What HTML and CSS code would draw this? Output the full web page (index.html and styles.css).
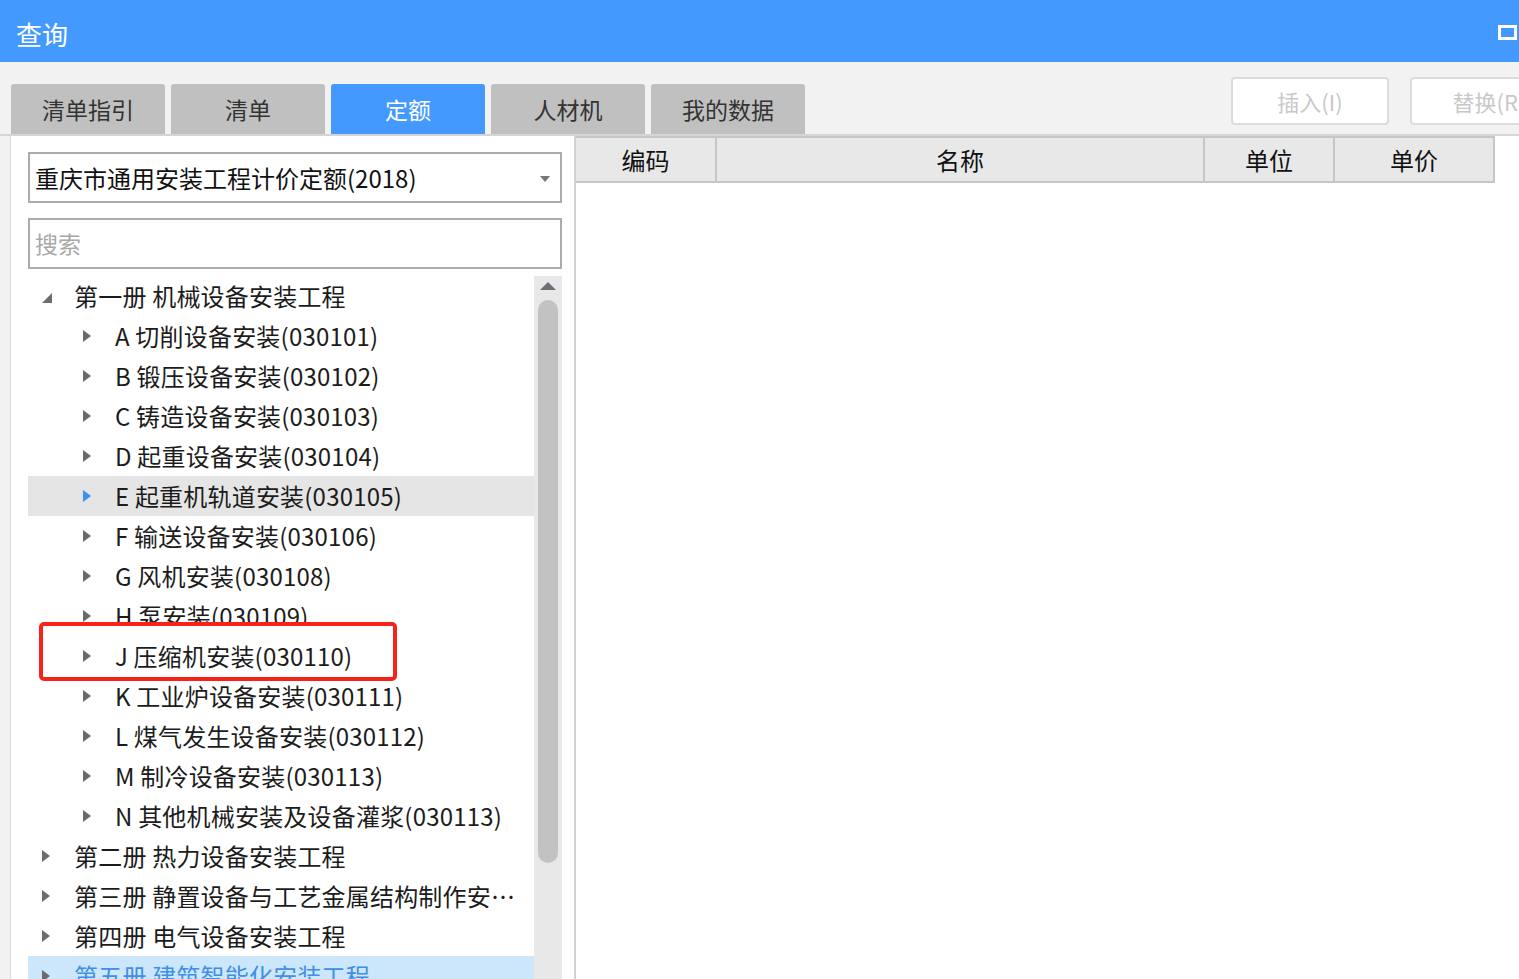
FILE: index.html
```html
<!DOCTYPE html>
<html lang="zh-CN">
<head>
<meta charset="utf-8">
<title>查询</title>
<link rel="stylesheet" href="styles.css">
</head>
<body>
<div class="window">
  <div class="titlebar">
    <span class="title">查询</span>
    <span class="win-btn"></span>
  </div>
  <div class="toolbar">
    <div class="tabs">
      <div class="tab">清单指引</div>
      <div class="tab">清单</div>
      <div class="tab active">定额</div>
      <div class="tab">人材机</div>
      <div class="tab">我的数据</div>
    </div>
    <div class="actions">
      <button class="btn">插入(I)</button>
      <button class="btn">替换(R)</button>
    </div>
  </div>
  <div class="main">
    <div class="left">
      <div class="select">
        <span class="select-text">重庆市通用安装工程计价定额(2018)</span>
        <svg class="caret" width="10" height="6" viewBox="0 0 10 6"><path d="M0 0H10L5 6Z" fill="#777"/></svg>
      </div>
      <div class="search">搜索</div>
      <div class="tree">
        <div class="tree-list">
          <div class="row lv1 open"><svg class="arr" width="12" height="12" viewBox="0 0 12 12"><path d="M11 1V11H1Z" fill="#6e6e6e"/></svg><span class="txt">第一册 机械设备安装工程</span></div>
          <div class="row lv2"><svg class="arr" width="8" height="12" viewBox="0 0 8 12"><path d="M0 0L8 6L0 12Z" fill="#6b6b6b"/></svg><span class="txt">A 切削设备安装(030101)</span></div>
          <div class="row lv2"><svg class="arr" width="8" height="12" viewBox="0 0 8 12"><path d="M0 0L8 6L0 12Z" fill="#6b6b6b"/></svg><span class="txt">B 锻压设备安装(030102)</span></div>
          <div class="row lv2"><svg class="arr" width="8" height="12" viewBox="0 0 8 12"><path d="M0 0L8 6L0 12Z" fill="#6b6b6b"/></svg><span class="txt">C 铸造设备安装(030103)</span></div>
          <div class="row lv2"><svg class="arr" width="8" height="12" viewBox="0 0 8 12"><path d="M0 0L8 6L0 12Z" fill="#6b6b6b"/></svg><span class="txt">D 起重设备安装(030104)</span></div>
          <div class="row lv2 hover"><svg class="arr" width="8" height="12" viewBox="0 0 8 12"><path d="M0 0L8 6L0 12Z" fill="#3d8ef5"/></svg><span class="txt">E 起重机轨道安装(030105)</span></div>
          <div class="row lv2"><svg class="arr" width="8" height="12" viewBox="0 0 8 12"><path d="M0 0L8 6L0 12Z" fill="#6b6b6b"/></svg><span class="txt">F 输送设备安装(030106)</span></div>
          <div class="row lv2"><svg class="arr" width="8" height="12" viewBox="0 0 8 12"><path d="M0 0L8 6L0 12Z" fill="#6b6b6b"/></svg><span class="txt">G 风机安装(030108)</span></div>
          <div class="row lv2 clipped"><svg class="arr" width="8" height="12" viewBox="0 0 8 12"><path d="M0 0L8 6L0 12Z" fill="#6b6b6b"/></svg><span class="txt">H 泵安装(030109)</span></div>
          <div class="row lv2"><svg class="arr" width="8" height="12" viewBox="0 0 8 12"><path d="M0 0L8 6L0 12Z" fill="#6b6b6b"/></svg><span class="txt">J 压缩机安装(030110)</span></div>
          <div class="row lv2"><svg class="arr" width="8" height="12" viewBox="0 0 8 12"><path d="M0 0L8 6L0 12Z" fill="#6b6b6b"/></svg><span class="txt">K 工业炉设备安装(030111)</span></div>
          <div class="row lv2"><svg class="arr" width="8" height="12" viewBox="0 0 8 12"><path d="M0 0L8 6L0 12Z" fill="#6b6b6b"/></svg><span class="txt">L 煤气发生设备安装(030112)</span></div>
          <div class="row lv2"><svg class="arr" width="8" height="12" viewBox="0 0 8 12"><path d="M0 0L8 6L0 12Z" fill="#6b6b6b"/></svg><span class="txt">M 制冷设备安装(030113)</span></div>
          <div class="row lv2"><svg class="arr" width="8" height="12" viewBox="0 0 8 12"><path d="M0 0L8 6L0 12Z" fill="#6b6b6b"/></svg><span class="txt">N 其他机械安装及设备灌浆(030113)</span></div>
          <div class="row lv1"><svg class="arr" width="8" height="12" viewBox="0 0 8 12"><path d="M0 0L8 6L0 12Z" fill="#6b6b6b"/></svg><span class="txt">第二册 热力设备安装工程</span></div>
          <div class="row lv1"><svg class="arr" width="8" height="12" viewBox="0 0 8 12"><path d="M0 0L8 6L0 12Z" fill="#6b6b6b"/></svg><span class="txt">第三册 静置设备与工艺金属结构制作安装工程</span></div>
          <div class="row lv1"><svg class="arr" width="8" height="12" viewBox="0 0 8 12"><path d="M0 0L8 6L0 12Z" fill="#6b6b6b"/></svg><span class="txt">第四册 电气设备安装工程</span></div>
          <div class="row lv1 selected"><svg class="arr" width="8" height="12" viewBox="0 0 8 12"><path d="M0 0L8 6L0 12Z" fill="#6b6b6b"/></svg><span class="txt">第五册 建筑智能化安装工程</span></div>
          <div class="mark"></div>
        </div>
        <div class="scrollbar">
          <svg class="up" width="16" height="8" viewBox="0 0 16 8"><path d="M8 0L16 8H0Z" fill="#6e6e78"/></svg>
          <div class="thumb"></div>
        </div>
      </div>
    </div>
    <div class="right">
      <div class="grid-head">
        <div class="col c1">编码</div>
        <div class="col c2">名称</div>
        <div class="col c3">单位</div>
        <div class="col c4">单价</div>
      </div>
    </div>
  </div>
</div>
</body>
</html>
```

FILE: styles.css
```css
* { box-sizing: border-box; }
html, body {
  margin: 0;
  padding: 0;
  width: 1519px;
  height: 979px;
  overflow: hidden;
  background: #f2f2f2;
  font-family: "Noto Sans CJK SC", "Noto Sans", sans-serif;
}
.window {
  width: 1519px;
  height: 979px;
  display: flex;
  flex-direction: column;
  overflow: hidden;
}
.titlebar {
  height: 62px;
  flex-shrink: 0;
  background: #4499ff;
  display: flex;
  align-items: center;
  justify-content: space-between;
  padding: 0 2px 0 16px;
}
.title {
  color: #fff;
  font-size: 26px;
  line-height: 30px;
  margin-top: 6px;
}
.win-btn {
  width: 19px;
  height: 15px;
  border: 3px solid #fff;
  background: #4499ff;
  margin-top: 2px;
}
.toolbar {
  height: 72px;
  flex-shrink: 0;
  display: flex;
  justify-content: space-between;
  padding-left: 11px;
  overflow: hidden;
}
.tabs {
  display: flex;
  gap: 6px;
  align-self: flex-end;
}
.tab {
  width: 154px;
  height: 50px;
  background: #c0c0c0;
  border-radius: 3px 3px 0 0;
  color: #333;
  font-size: 23px;
  line-height: 50px;
  text-align: center;
}
.tab.active {
  background: #4499ff;
  color: #fff;
}
.actions {
  display: flex;
  gap: 21px;
  padding-top: 15px;
  margin-right: -49px;
}
.btn {
  width: 158px;
  height: 48px;
  flex-shrink: 0;
  background: #fff;
  border: 2px solid #dcdcdc;
  border-radius: 4px;
  color: #c8c8c8;
  font-family: "Noto Sans CJK SC", "Noto Sans", sans-serif;
  font-size: 22px;
  line-height: 40px;
  padding: 0;
}
.main {
  flex: 1;
  display: flex;
  border-top: 2px solid #d6d6d6;
  padding-left: 10px;
  min-height: 0;
}
.left {
  width: 566px;
  flex-shrink: 0;
  background: #fff;
  border-left: 1px solid #dedede;
  border-right: 2px solid #d2d2d2;
  padding: 16px 12px 0 17px;
  display: flex;
  flex-direction: column;
  min-height: 0;
}
.select {
  height: 51px;
  border: 2px solid #acacac;
  display: flex;
  align-items: center;
  justify-content: space-between;
  padding: 0 10px 0 5px;
  flex-shrink: 0;
}
.select-text {
  font-size: 24px;
  color: #111;
  line-height: 30px;
}
.caret { margin-top: 2px; }
.search {
  margin-top: 15px;
  height: 51px;
  border: 2px solid #acacac;
  padding-left: 5px;
  font-size: 23px;
  line-height: 47px;
  color: #a8a8a8;
  flex-shrink: 0;
}
.tree {
  margin-top: 7px;
  flex: 1;
  display: flex;
  min-height: 0;
  overflow: hidden;
}
.tree-list {
  flex: 1;
  position: relative;
  min-width: 0;
}
.row {
  height: 40px;
  display: flex;
  align-items: center;
  font-size: 24px;
  color: #1c1c1c;
  white-space: nowrap;
  letter-spacing: 0.2px;
}
.row .txt {
  line-height: 40px;
  overflow: hidden;
  text-overflow: ellipsis;
  padding-right: 18px;
}
.row.lv1 .arr { margin-left: 14px; margin-right: 24px; flex-shrink: 0; }
.row.lv1.open .arr { margin-left: 13px; margin-right: 21px; margin-top: 4px; }
.row.lv2 .arr { margin-left: 55px; margin-right: 24px; flex-shrink: 0; }
.row.hover { background: #e5e5e5; }
.row.selected { background: #cce6fc; color: #3f8fe6; }
.row.clipped { align-items: flex-start; }
.row.clipped .txt { height: 28px; }
.row.clipped .arr { margin-top: 14px; }
.mark {
  position: absolute;
  left: 11px;
  top: 346px;
  width: 358px;
  height: 59px;
  border: 4px solid #f7231a;
  border-radius: 5px;
}
.scrollbar {
  width: 28px;
  flex-shrink: 0;
  background: #e8e8e8;
  display: flex;
  flex-direction: column;
  align-items: center;
  padding-top: 6px;
}
.up { flex-shrink: 0; }
.thumb {
  margin-top: 10px;
  width: 20px;
  height: 563px;
  background: #c2c2c2;
  border-radius: 10px;
}
.right {
  flex: 1;
  background: #fff;
  min-width: 0;
}
.grid-head {
  display: flex;
  width: 919px;
  height: 47px;
  background: #e8e8e8;
  border-top: 2px solid #c6c6c6;
  border-bottom: 2px solid #c6c6c6;
  border-right: 2px solid #c6c6c6;
}
.col {
  font-size: 24px;
  color: #111;
  text-align: center;
  line-height: 43px;
  border-right: 2px solid #c6c6c6;
}
.col.c1 { width: 141px; }
.col.c2 { width: 488px; }
.col.c3 { width: 130px; }
.col.c4 { width: 158px; border-right: none; }
```
